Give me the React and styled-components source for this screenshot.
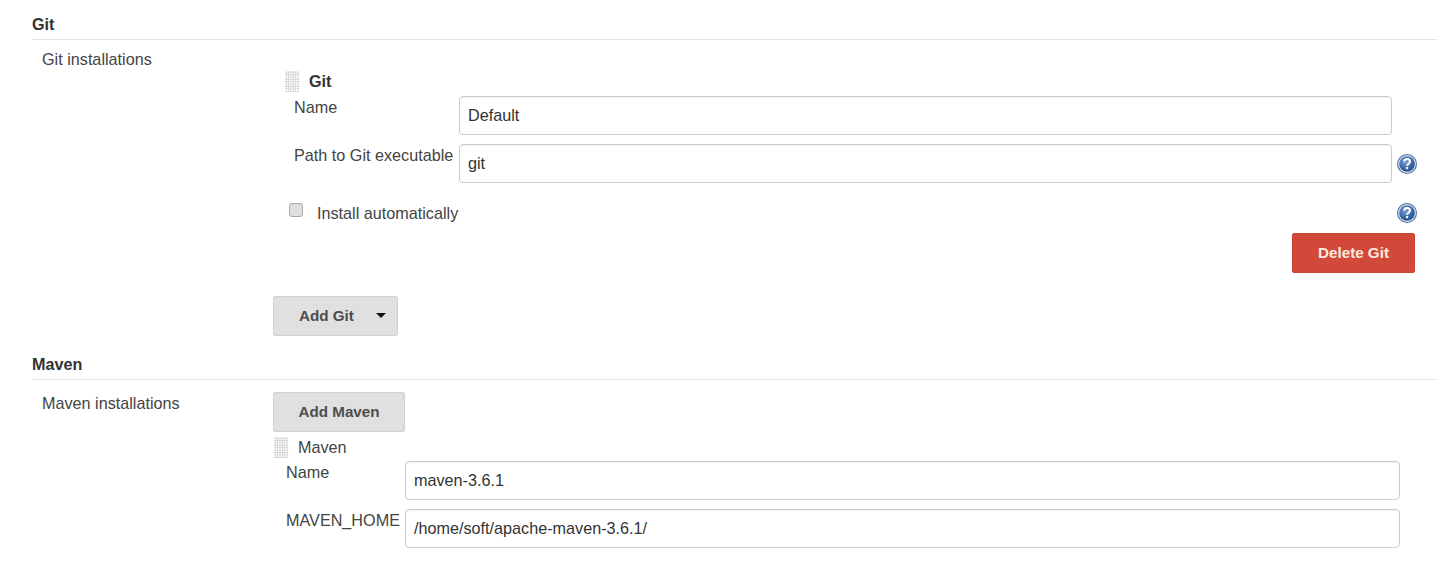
import styled, { createGlobalStyle } from 'styled-components';

const GlobalStyle = createGlobalStyle`
  html, body {
    margin: 0;
    padding: 0;
    background: #fff;
  }
  body {
    font-family: 'Liberation Sans', Arial, sans-serif;
    color: #333;
  }
`;

const Page = styled.div`
  width: 1443px;
  height: 567px;
  box-sizing: border-box;
  padding: 14px 6px 0 32px;
  overflow: hidden;
`;

const SectionHeader = styled.h2`
  margin: 0;
  height: 25px;
  border-bottom: 1px solid #e2e2e2;
  font-size: 16.2px;
  font-weight: 700;
  line-height: 20px;
  color: #333;
`;

const SectionBody = styled.div`
  display: grid;
  grid-template-columns: 241px 1fr;
  height: ${(p) => p.$height}px;
`;

const SectionLabel = styled.div`
  padding: ${(p) => p.$top}px 0 0 10px;
  font-size: 16.2px;
  line-height: 20px;
  color: #444;
`;

const SectionContent = styled.div`
  padding-top: ${(p) => p.$top}px;
`;

const Block = styled.div`
  margin-left: ${(p) => p.$indent}px;
  margin-top: ${(p) => p.$top || 0}px;
`;

const BlockHeader = styled.div`
  display: flex;
  align-items: center;
  gap: 10px;
  height: 21px;
`;

const Handle = styled.span`
  width: 14px;
  height: 21px;
  background-image: radial-gradient(circle, #d2d2d2 1px, transparent 1px);
  background-size: 2.4px 2.4px;
`;

const BlockTitle = styled.span`
  padding-bottom: 2px;
  font-size: 16.2px;
  line-height: 20px;
  font-weight: ${(p) => (p.$bold ? 700 : 400)};
  color: ${(p) => (p.$bold ? '#333' : '#444')};
`;

const FieldGrid = styled.div`
  display: grid;
  grid-template-columns: ${(p) => p.$label}px ${(p) => p.$input}px 25px;
  row-gap: 9px;
  margin-left: ${(p) => p.$indent}px;
  margin-top: ${(p) => p.$top}px;
`;

const FieldLabel = styled.label`
  font-size: 16.2px;
  line-height: 20px;
  padding-top: 1px;
  color: #444;
  white-space: nowrap;
`;

const TextInput = styled.input`
  box-sizing: border-box;
  width: 100%;
  height: 39px;
  padding: 0 8px;
  border: 1px solid #ccc;
  border-radius: 4px;
  box-shadow: inset 0 1px 1px rgba(0, 0, 0, 0.06);
  background: #fff;
  font-family: inherit;
  font-size: 16.2px;
  color: #333;
  outline: none;
`;

const HelpCell = styled.div`
  display: flex;
  align-items: center;
  justify-content: flex-end;
`;

const CheckRow = styled.div`
  display: flex;
  align-items: center;
  height: 24px;
  margin: ${(p) => p.$top}px 0 0 4px;
  width: 1128px;
`;

const Checkbox = styled.input.attrs({ type: 'checkbox' })`
  appearance: none;
  box-sizing: border-box;
  width: 14px;
  height: 14px;
  margin: -6px 14px 0 0;
  border: 1px solid #a9a9a9;
  border-radius: 3px;
  background: #dedede;
`;

const CheckLabel = styled.label`
  flex: 1;
  font-size: 16.2px;
  line-height: 20px;
  color: #444;
`;

const ButtonRow = styled.div`
  display: flex;
  justify-content: flex-end;
  width: 1142px;
  margin-top: 8px;
`;

const Button = styled.button`
  display: flex;
  align-items: center;
  justify-content: ${(p) => (p.$caret ? 'flex-start' : 'center')};
  box-sizing: border-box;
  width: ${(p) => p.$width}px;
  height: 40px;
  padding: ${(p) => (p.$caret ? '0 0 2px 25px' : '0 0 2px')};
  border: 1px solid ${(p) => (p.$danger ? '#c94435' : '#d0d0d0')};
  border-radius: 2px;
  background: ${(p) => (p.$danger ? '#d24939' : '#e0e0e0')};
  color: ${(p) => (p.$danger ? '#fbe9df' : '#4d4d4d')};
  font-family: inherit;
  font-size: 15.2px;
  font-weight: 700;
`;

const Caret = styled.span`
  width: 0;
  height: 0;
  margin-left: 22px;
  border-left: 5px solid transparent;
  border-right: 5px solid transparent;
  border-top: 5px solid #111;
`;

const AddRow = styled.div`
  margin-top: ${(p) => p.$top}px;
`;

const HelpIcon = () => (
  <svg width="20" height="20" viewBox="0 0 20 20" aria-hidden="true">
    <defs>
      <radialGradient id="helpFill" cx="40%" cy="35%" r="70%">
        <stop offset="0%" stopColor="#7fa3d4" />
        <stop offset="70%" stopColor="#34619f" />
        <stop offset="100%" stopColor="#2a4f88" />
      </radialGradient>
    </defs>
    <circle cx="10" cy="10" r="10" fill="#4a6fa5" />
    <circle cx="10" cy="10" r="8.9" fill="#dfe8f3" />
    <circle cx="10" cy="10" r="7.8" fill="url(#helpFill)" />
    <path d="M7.2 7.6c0-1.7 1.3-2.7 2.9-2.7s2.9 1 2.9 2.5c0 2.3-2.9 2.3-2.9 4.4" fill="none" stroke="#fff" strokeWidth="2" />
    <rect x="9.1" y="13" width="2" height="2.2" fill="#fff" />
  </svg>
);

export default function App() {
  return (
    <>
      <GlobalStyle />
      <Page>
        <SectionHeader>Git</SectionHeader>
        <SectionBody $height={314}>
          <SectionLabel $top={9}>Git installations</SectionLabel>
          <SectionContent $top={31}>
            <Block $indent={12}>
              <BlockHeader>
                <Handle />
                <BlockTitle $bold>Git</BlockTitle>
              </BlockHeader>
            </Block>
            <FieldGrid $indent={21} $label={165} $input={933} $top={4}>
              <FieldLabel>Name</FieldLabel>
              <TextInput defaultValue="Default" />
              <span />
              <FieldLabel>Path to Git executable</FieldLabel>
              <TextInput defaultValue="git" />
              <HelpCell>
                <HelpIcon />
              </HelpCell>
            </FieldGrid>
            <Block $indent={12}>
              <CheckRow $top={18}>
                <Checkbox />
                <CheckLabel>Install automatically</CheckLabel>
                <HelpIcon />
              </CheckRow>
            </Block>
            <ButtonRow>
              <Button $danger $width={123}>Delete Git</Button>
            </ButtonRow>
            <AddRow $top={23}>
              <Button $caret $width={125}>Add Git<Caret /></Button>
            </AddRow>
          </SectionContent>
        </SectionBody>
        <SectionHeader>Maven</SectionHeader>
        <SectionBody $height={187}>
          <SectionLabel $top={13}>Maven installations</SectionLabel>
          <SectionContent $top={12}>
            <Button $width={132}>Add Maven</Button>
            <Block $indent={1} $top={5}>
              <BlockHeader>
                <Handle />
                <BlockTitle>Maven</BlockTitle>
              </BlockHeader>
            </Block>
            <FieldGrid $indent={13} $label={119} $input={995} $top={3}>
              <FieldLabel>Name</FieldLabel>
              <TextInput defaultValue="maven-3.6.1" />
              <span />
              <FieldLabel>MAVEN_HOME</FieldLabel>
              <TextInput defaultValue="/home/soft/apache-maven-3.6.1/" />
              <span />
            </FieldGrid>
          </SectionContent>
        </SectionBody>
      </Page>
    </>
  );
}
